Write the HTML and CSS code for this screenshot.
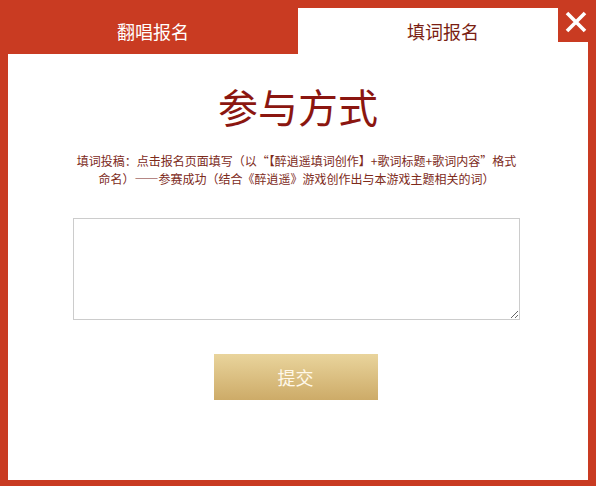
FILE: index.html
```html
<!DOCTYPE html>
<html lang="zh-CN">
<head>
<meta charset="utf-8">
<title>参与方式</title>
<link rel="stylesheet" href="styles.css">
</head>
<body>
<div class="dialog">
  <div class="tabs">
    <div class="tab">翻唱报名</div>
    <div class="tab active">填词报名</div>
  </div>
  <button class="close" aria-label="关闭">
    <svg width="22" height="22" viewBox="0 0 22 22"><path d="M2 2L20 20M20 2L2 20" stroke="#fff" stroke-width="3.6" stroke-linecap="butt"/></svg>
  </button>
  <div class="panel">
    <h1 class="title">参与方式</h1>
    <div class="content">
      <p class="desc">填词投稿：点击报名页面填写（以“【醉逍遥填词创作】+歌词标题+歌词内容”格式命名）——参赛成功（结合《醉逍遥》游戏创作出与本游戏主题相关的词）</p>
      <textarea class="input"></textarea>
      <div class="actions"><button class="submit">提交</button></div>
    </div>
  </div>
</div>
</body>
</html>
```
FILE: styles.css
```css
html, body {
  margin: 0;
  padding: 0;
}
body {
  background: #c93b22;
  width: 596px;
  height: 486px;
  overflow: hidden;
  font-family: "Noto Sans CJK SC", "Noto Sans", sans-serif;
}
.dialog {
  position: relative;
  margin: 8px 8px 0 8px;
  width: 580px;
}
.tabs {
  display: flex;
  height: 46px;
}
.tab {
  flex: 1;
  text-align: center;
  line-height: 46px;
  font-size: 18px;
  color: #fff;
}
.tab.active {
  background: #fff;
  color: #7a1e12;
}
.close {
  position: absolute;
  top: -8px;
  right: 0;
  width: 30px;
  height: 42px;
  padding: 0;
  border: 0;
  background: #c93b22;
  display: flex;
  align-items: flex-start;
  justify-content: center;
  padding-top: 11px;
  box-sizing: border-box;
  cursor: pointer;
}
.close svg {
  display: block;
  margin-left: 6px;
}
.panel {
  background: #fff;
  height: 426px;
  padding-top: 32px;
  box-sizing: border-box;
}
.title {
  margin: 0;
  text-align: center;
  font-size: 40px;
  line-height: 40px;
  font-weight: normal;
  color: #8b1610;
}
.content {
  width: 447px;
  margin-left: 65px;
}
.desc {
  margin: 26px 0 0 0;
  font-size: 12px;
  line-height: 18px;
  text-align: center;
  color: #7d2a1a;
}
.input {
  display: block;
  margin-top: 30px;
  width: 447px;
  height: 102px;
  box-sizing: border-box;
  border: 1px solid #cccccc;
  padding: 4px;
  font-family: inherit;
  outline: none;
}
.actions {
  display: flex;
  justify-content: center;
  margin-top: 34px;
}
.submit {
  width: 164px;
  height: 46px;
  border: 0;
  padding: 0;
  margin-right: 2px;
  background: linear-gradient(#e9d49c, #cdab68);
  color: #fff8ea;
  font-family: inherit;
  font-size: 18px;
  cursor: pointer;
}
```
